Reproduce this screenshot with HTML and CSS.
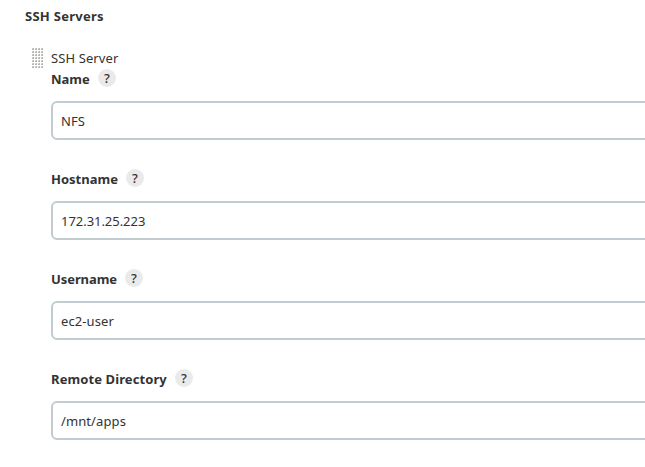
FILE: index.html
```html
<!DOCTYPE html>
<html lang="en">
<head>
<meta charset="utf-8">
<title>SSH Servers</title>
<link rel="stylesheet" href="styles.css">
</head>
<body>
<main class="section">
  <h1 class="section-title">SSH Servers</h1>
  <div class="server">
    <svg class="drag-handle" width="12" height="20" aria-hidden="true">
      <defs><pattern id="dots" width="3" height="3" patternUnits="userSpaceOnUse"><path fill="#d8d8d5" d="M0 0h2v2H0z"/><path fill="#b5b5b2" d="M1 0h1v2H0V1h1z"/></pattern></defs>
      <rect width="12" height="20" fill="url(#dots)"/>
    </svg>
    <form class="fields">
      <div class="server-caption">SSH Server</div>
      <div class="field"><div class="label-row"><label for="name">Name</label><span class="help">?</span></div><input id="name" value="NFS"></div>
      <div class="field"><div class="label-row"><label for="host">Hostname</label><span class="help">?</span></div><input id="host" class="numeric" value="172.31.25.223"></div>
      <div class="field"><div class="label-row"><label for="user" class="snug">Username</label><span class="help">?</span></div><input id="user" value="ec2-user"></div>
      <div class="field"><div class="label-row"><label for="dir" class="wide">Remote Directory</label><span class="help">?</span></div><input id="dir" value="/mnt/apps"></div>
    </form>
  </div>
</main>
</body>
</html>
```
FILE: styles.css
```css
* { box-sizing: border-box; }
body { margin: 0; background: #fff; color: #333; font: 14px/20px "Noto Sans", sans-serif; overflow: hidden; }
.section { padding: 6px 0 0 25px; }
.section-title { margin: 0; font-size: 13px; line-height: 20px; letter-spacing: 0.27px; }
.server { display: flex; padding: 22px 0 0 7px; }
.drag-handle { flex: none; margin-right: 7px; }
.fields { flex: none; width: 620px; }
.server-caption { font-size: 13px; height: 20px; letter-spacing: 0.1px; }
.field { height: 100px; }
.label-row { display: flex; align-items: center; gap: 8px; height: 21px; font-size: 13px; font-weight: 700; }
.snug { letter-spacing: -0.08px; }
.wide { letter-spacing: 0.1px; }
.help { width: 18px; height: 18px; margin-top: -2px; border-radius: 50%; background: #eaeaea; font-size: 13px; font-weight: 500; line-height: 18px; text-align: center; }
input { display: block; width: 100%; height: 39px; margin-top: 12px; padding: 0 8px; border: 2px solid #c0cccf; border-radius: 6px; color: #333; font: 13px "Noto Sans", sans-serif; letter-spacing: 0.1px; }
.numeric { letter-spacing: -0.04px; }
```
